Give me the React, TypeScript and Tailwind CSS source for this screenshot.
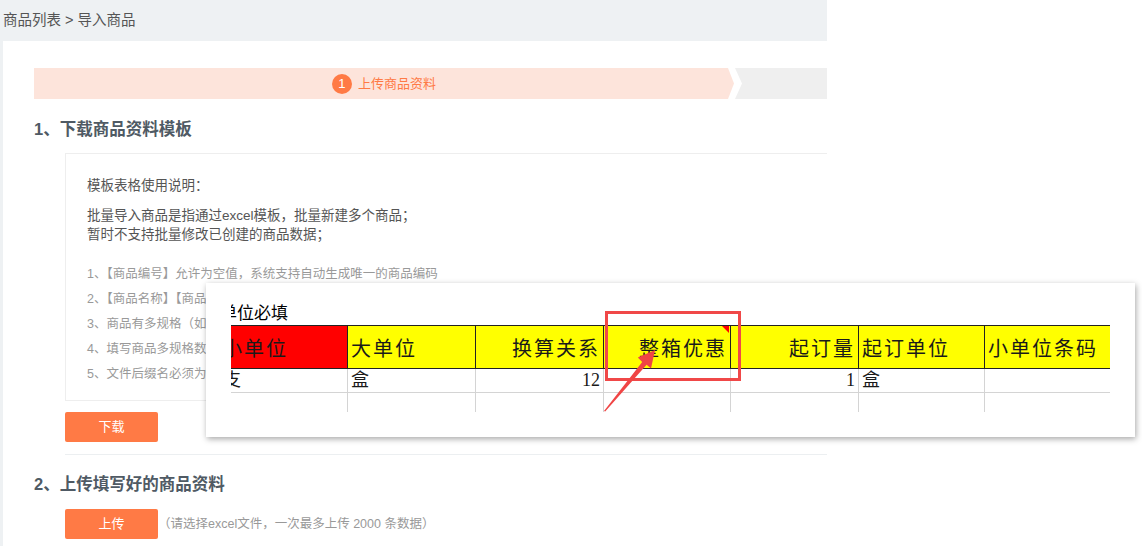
import React from 'react';

const rules = [
  '1、【商品编号】允许为空值，系统支持自动生成唯一的商品编码',
  '2、【商品名称】【商品分类】【单位】为必填项，不能为空',
  '3、商品有多规格（如颜色、尺码），请在同一商品下分行填写',
  '4、填写商品多规格数据时，规格名称与规格值需一一对应',
  '5、文件后缀名必须为.xls或.xlsx（即Excel格式）',
];

type Cell = { text: string; align: 'left' | 'right'; w: string; red?: boolean; cut?: boolean; mark?: boolean };

const headers: Cell[] = [
  { text: '小单位', align: 'left', w: 'w-[117px]', red: true, cut: true },
  { text: '大单位', align: 'left', w: 'w-[128px]' },
  { text: '换算关系', align: 'right', w: 'w-[128px]' },
  { text: '整箱优惠', align: 'right', w: 'w-[127px]', mark: true },
  { text: '起订量', align: 'right', w: 'w-[128px]' },
  { text: '起订单位', align: 'left', w: 'w-[126px]' },
  { text: '小单位条码', align: 'left', w: 'w-[125px]' },
];

const row = ['支', '盒', '12', '', '1', '盒', ''];

const SheetShot = () => (
  <div className="absolute left-[206px] top-[283px] w-[929px] h-[154px] bg-white shadow-[1px_2px_6px_rgba(0,0,0,0.35)]">
    <div className="ml-[25px] w-[879px] overflow-hidden pt-[20px] font-['Liberation_Serif','Noto_Sans_CJK_SC',serif] text-[#1a1a1a]">
      <div className="-ml-[11px] h-[22px] text-[17px] leading-[22px] text-black">单位必填</div>
      <div className="flex h-[44px] border-y border-[#222]">
        {headers.map((h, i) => (
          <div
            key={i}
            className={`relative ${h.w} shrink-0 flex items-center ${h.red ? 'bg-[#ff0000]' : 'bg-[#ffff00]'} ${i < headers.length - 1 ? 'border-r border-[#222]' : ''} ${h.align === 'right' ? 'justify-end pr-[3px]' : h.cut ? '' : 'pl-[3px]'} text-[20px] tracking-[2px] pt-[3px]`}
          >
            <span className={h.cut ? '-ml-[9px] whitespace-nowrap' : 'whitespace-nowrap'}>{h.text}</span>
            {h.mark && (
              <span className="absolute right-[1px] top-0 w-0 h-0 border-l-[7px] border-l-transparent border-t-[7px] border-t-[#ff0000]" />
            )}
          </div>
        ))}
      </div>
      <div className="flex h-[24px] border-b border-[#d4d4d4]">
        {row.map((t, i) => (
          <div
            key={i}
            className={`${headers[i].w} shrink-0 flex items-center ${i < row.length - 1 ? 'border-r border-[#d4d4d4]' : ''} ${headers[i].align === 'right' ? 'justify-end pr-[3px]' : i === 0 ? '' : 'pl-[3px]'} text-[18px]`}
          >
            <span className={i === 0 ? '-ml-[8px]' : ''}>{t}</span>
          </div>
        ))}
      </div>
      <div className="flex h-[19px]">
        {row.map((_, i) => (
          <div key={i} className={`${headers[i].w} shrink-0 ${i < row.length - 1 ? 'border-r border-[#d4d4d4]' : ''}`} />
        ))}
      </div>
    </div>
    <div className="absolute left-[399px] top-[28px] w-[136px] h-[70px] border-[3px] border-[#f04848]" />
  </div>
);

const Arrow = () => (
  <svg className="absolute left-[600px] top-[345px]" width="62" height="70" viewBox="0 0 62 70">
    <polygon points="4,66 42.2,17 37.8,12.6 55,5 51,23.4 46.6,19.8 5.2,66.6" fill="#f04545" />
  </svg>
);

export default function App() {
  return (
    <div className="relative w-[1142px] h-[546px] overflow-hidden bg-white font-['Liberation_Sans','Noto_Sans_CJK_SC',sans-serif]">
      <div className="w-[827px] h-full flex flex-col bg-[#eef1f3]">
        <div className="h-[41px] shrink-0 flex items-center pl-[3px] text-[14.5px] text-[#555]">
          商品列表 &gt; 导入商品
        </div>
        <div className="ml-[3px] flex-1 bg-white overflow-hidden pl-[31px] pt-[27px]">
          {/* steps */}
          <div className="flex h-[31px] w-[1000px]">
            <div className="w-[700px] shrink-0 flex items-center justify-center gap-[6px] bg-[#fde4db] [clip-path:polygon(0_0,694px_0,100%_50%,694px_100%,0_100%)]">
              <span className="w-[20px] h-[20px] rounded-full bg-[#ff7a45] text-white text-[13px] flex items-center justify-center">1</span>
              <span className="text-[13px] text-[#ff7a45]">上传商品资料</span>
            </div>
            <div className="ml-[1px] flex-1 bg-[#efefef] [clip-path:polygon(0_0,100%_0,100%_100%,0_100%,7px_50%)]" />
          </div>

          <h2 className="mt-[18px] text-[16.5px] leading-[24px] font-bold text-[#4f5a64]">1、下载商品资料模板</h2>

          <div className="mt-[12px] ml-[31px] w-[800px] border border-[#eee] pl-[21px] pt-[22px] pb-[13px]">
            <p className="text-[13.5px] leading-[20px] text-[#555]">模板表格使用说明：</p>
            <div className="mt-[10px] text-[13.5px] leading-[19px] text-[#555]">
              <p>批量导入商品是指通过excel模板，批量新建多个商品；</p>
              <p>暂时不支持批量修改已创建的商品数据；</p>
            </div>
            <ul className="mt-[18px] text-[12.5px] leading-[25px] text-[#999]">
              {rules.map((r) => (
                <li key={r}>{r}</li>
              ))}
            </ul>
          </div>

          <button className="mt-[11px] ml-[31px] w-[93px] h-[30px] rounded-[2px] bg-[#ff7a45] text-white text-[13px]">下载</button>

          <div className="mt-[12px] ml-[31px] h-px bg-[#eceff1]" />

          <h2 className="mt-[17px] text-[16.5px] leading-[24px] font-bold text-[#4f5a64]">2、上传填写好的商品资料</h2>

          <div className="mt-[13px] ml-[31px] flex items-center">
            <button className="w-[93px] h-[30px] rounded-[2px] bg-[#ff7a45] text-white text-[13px]">上传</button>
            <span className="text-[12.5px] text-[#999]">（请选择excel文件，一次最多上传 2000 条数据）</span>
          </div>
        </div>
      </div>
      <SheetShot />
      <Arrow />
    </div>
  );
}
